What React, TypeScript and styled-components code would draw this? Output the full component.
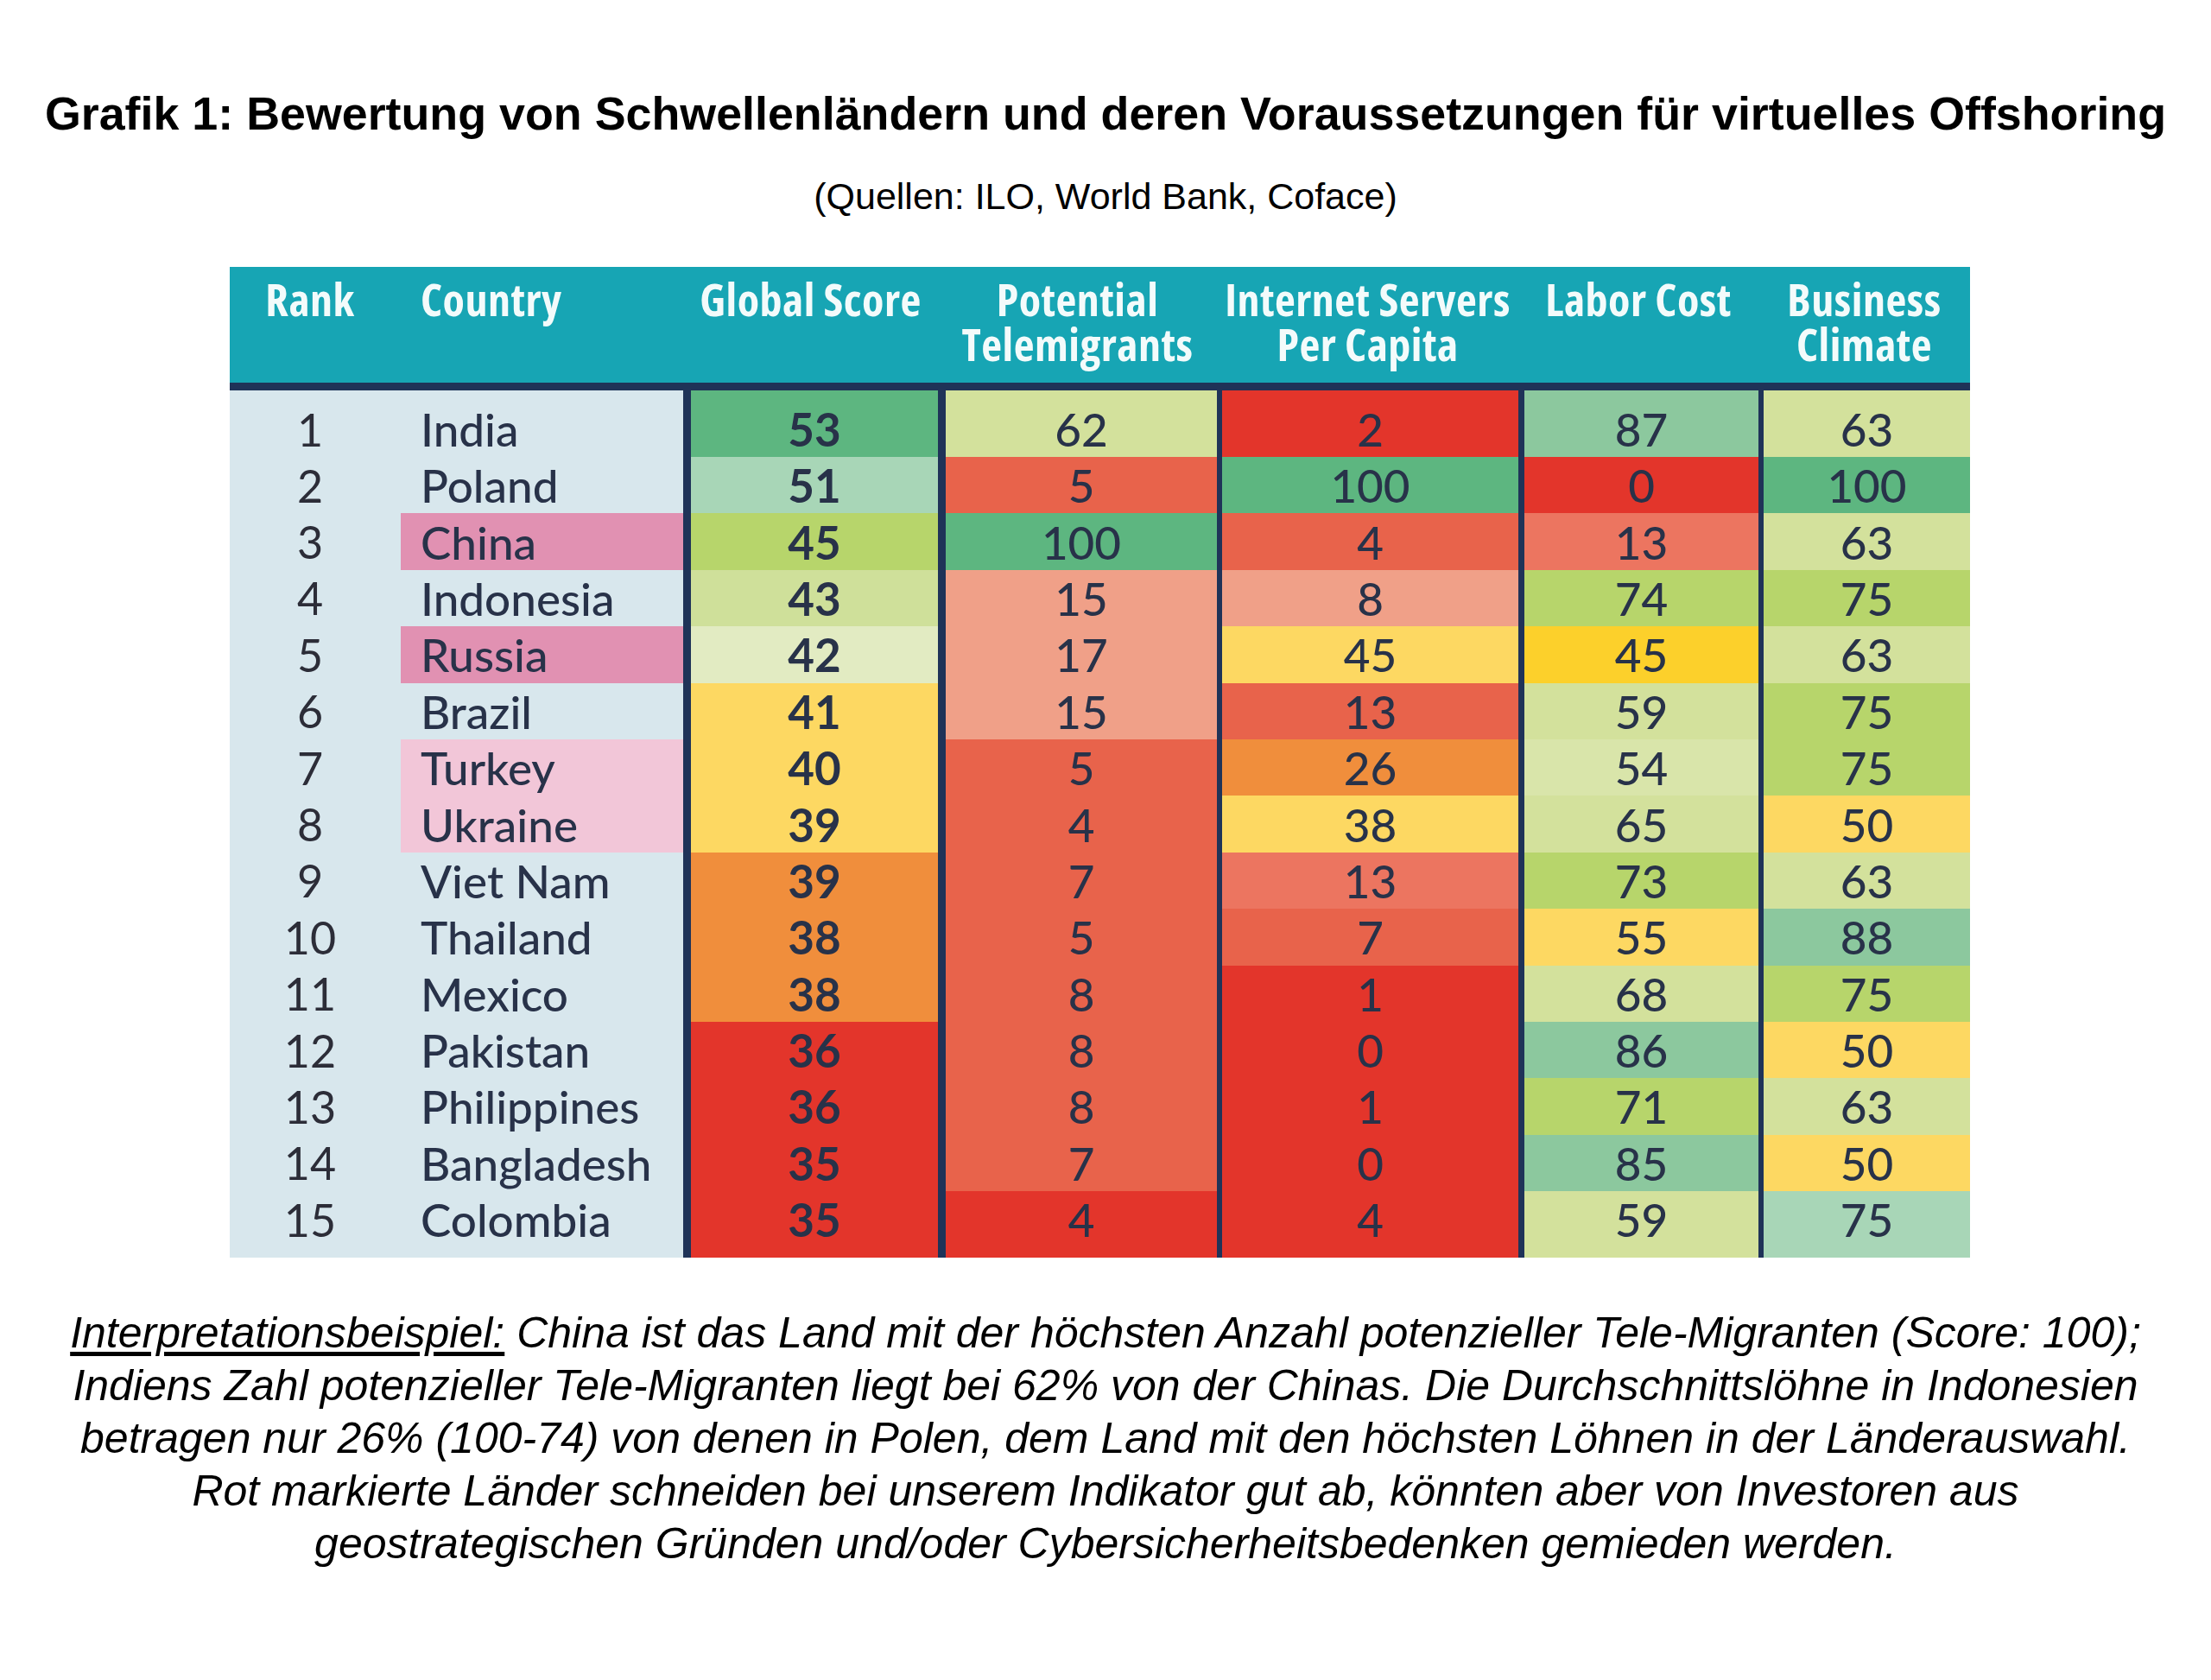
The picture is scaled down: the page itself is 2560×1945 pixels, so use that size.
import React from "react";
import styled, { createGlobalStyle } from "styled-components";

const GlobalStyle = createGlobalStyle`
  html, body { margin: 0; padding: 0; background: #ffffff; }
  body { font-family: "Liberation Sans", Arial, sans-serif; color: #000; }
`;

const C = {
  G: "#5db680",
  G2: "#8cc89e",
  G3: "#a8d6b7",
  L: "#b7d56b",
  P: "#d3e19c",
  P1: "#cfe09a",
  P2: "#e2ebc2",
  P3: "#d9e5aa",
  Y: "#fdd862",
  Y2: "#fcd02b",
  O: "#f08e3c",
  S: "#f0a088",
  S2: "#ec7560",
  R2: "#e8634b",
  R: "#e3352b",
};

type Cell = [number, string];
type Row = {
  rank: number;
  country: string;
  mark?: "hot" | "soft";
  cells: Cell[];
};

const rows: Row[] = [
  { rank: 1, country: "India", cells: [[53, C.G], [62, C.P], [2, C.R], [87, C.G2], [63, C.P]] },
  { rank: 2, country: "Poland", cells: [[51, C.G3], [5, C.R2], [100, C.G], [0, C.R], [100, C.G]] },
  { rank: 3, country: "China", mark: "hot", cells: [[45, C.L], [100, C.G], [4, C.R2], [13, C.S2], [63, C.P]] },
  { rank: 4, country: "Indonesia", cells: [[43, C.P1], [15, C.S], [8, C.S], [74, C.L], [75, C.L]] },
  { rank: 5, country: "Russia", mark: "hot", cells: [[42, C.P2], [17, C.S], [45, C.Y], [45, C.Y2], [63, C.P]] },
  { rank: 6, country: "Brazil", cells: [[41, C.Y], [15, C.S], [13, C.R2], [59, C.P], [75, C.L]] },
  { rank: 7, country: "Turkey", mark: "soft", cells: [[40, C.Y], [5, C.R2], [26, C.O], [54, C.P3], [75, C.L]] },
  { rank: 8, country: "Ukraine", mark: "soft", cells: [[39, C.Y], [4, C.R2], [38, C.Y], [65, C.P], [50, C.Y]] },
  { rank: 9, country: "Viet Nam", cells: [[39, C.O], [7, C.R2], [13, C.S2], [73, C.L], [63, C.P]] },
  { rank: 10, country: "Thailand", cells: [[38, C.O], [5, C.R2], [7, C.R2], [55, C.Y], [88, C.G2]] },
  { rank: 11, country: "Mexico", cells: [[38, C.O], [8, C.R2], [1, C.R], [68, C.P], [75, C.L]] },
  { rank: 12, country: "Pakistan", cells: [[36, C.R], [8, C.R2], [0, C.R], [86, C.G2], [50, C.Y]] },
  { rank: 13, country: "Philippines", cells: [[36, C.R], [8, C.R2], [1, C.R], [71, C.L], [63, C.P]] },
  { rank: 14, country: "Bangladesh", cells: [[35, C.R], [7, C.R2], [0, C.R], [85, C.G2], [50, C.Y]] },
  { rank: 15, country: "Colombia", cells: [[35, C.R], [4, C.R], [4, C.R], [59, C.P], [75, C.G3]] },
];

const dividers = [9, 9, 6, 7, 6];

const COLS = "198px 327px 295px 323px 349px 278px 245px";
const NAVY = "#1f3358";
const INK = "#283249";

const Page = styled.div`
  width: 2560px;
  min-height: 1945px;
  display: flex;
  flex-direction: column;
  align-items: center;
  padding-top: 100px;
  box-sizing: border-box;
`;

const Title = styled.h1`
  margin: 0;
  font-family: "Liberation Sans", Arial, sans-serif;
  font-weight: 700;
  font-size: 53.8px;
  line-height: 62px;
  color: #000;
  white-space: nowrap;
`;

const Subtitle = styled.div`
  margin-top: 41px;
  font-family: "Liberation Sans", Arial, sans-serif;
  font-size: 43px;
  line-height: 48px;
  color: #000;
`;

const Table = styled.div`
  margin-top: 58px;
  align-self: flex-start;
  margin-left: 266px;
  width: 2015px;
  display: flex;
  flex-direction: column;
`;

const HeaderRow = styled.div`
  display: grid;
  grid-template-columns: ${COLS};
  height: 134px;
  background: #17a5b4;
  border-bottom: 9px solid ${NAVY};
`;

const HeadCell = styled.div<{ $align?: "left" | "center"; $indent?: number; $shift?: number }>`
  padding-top: 11px;
  padding-left: ${(p) => p.$indent ?? 0}px;
  padding-right: ${(p) => p.$shift ?? 0}px;
  text-align: ${(p) => p.$align ?? "center"};
  font-family: "Open Sans", "Liberation Sans", sans-serif;
  font-stretch: 75%;
  font-weight: 700;
  font-size: 52px;
  line-height: 52px;
  letter-spacing: 0.5px;
  color: #f3fbfb;
  white-space: nowrap;
`;

const Body = styled.div`
  display: grid;
  grid-template-columns: ${COLS};
  grid-template-rows: 77px repeat(13, 65.4px) 77px;
`;

const edgePad = (edge?: "first" | "last") =>
  edge === "first" ? "padding-top: 12px;" : edge === "last" ? "padding-bottom: 12px;" : "";

const RankCell = styled.div<{ $edge?: "first" | "last" }>`
  display: flex;
  align-items: center;
  justify-content: center;
  background: #d8e7ed;
  ${(p) => edgePad(p.$edge)}
  padding-right: 12px;
  font-family: "Lato", "Open Sans", sans-serif;
  font-weight: 400;
  font-size: 52px;
  color: #2c2d38;
`;

const CountryCell = styled.div<{ $edge?: "first" | "last" }>`
  display: flex;
  align-items: stretch;
  background: #d8e7ed;
  ${(p) => edgePad(p.$edge)}
`;

const CountryTag = styled.div<{ $mark?: "hot" | "soft" }>`
  flex: 1;
  display: flex;
  align-items: center;
  padding-left: 23px;
  background: ${(p) => (p.$mark === "hot" ? "#e191b2" : p.$mark === "soft" ? "#f2c6d8" : "transparent")};
  font-family: "Lato", "Open Sans", sans-serif;
  font-weight: 500;
  font-size: 53px;
  color: ${INK};
`;

const ScoreCell = styled.div<{ $bg: string; $div: number; $bold?: boolean; $edge?: "first" | "last" }>`
  display: flex;
  align-items: center;
  justify-content: center;
  background: ${(p) => p.$bg};
  border-left: ${(p) => p.$div}px solid ${NAVY};
  ${(p) => edgePad(p.$edge)}
  font-family: "Lato", "Open Sans", sans-serif;
  font-weight: ${(p) => (p.$bold ? 700 : 500)};
  font-size: 53px;
  color: ${INK};
`;

const Note = styled.p`
  margin: 57px 0 0;
  font-family: "Liberation Sans", Arial, sans-serif;
  font-style: italic;
  font-size: 50px;
  line-height: 61px;
  text-align: center;
  color: #000;
  white-space: nowrap;
`;

const Lead = styled.span`
  text-decoration: underline;
  text-underline-offset: 5px;
`;

const headers: { label: React.ReactNode; align?: "left" | "center"; indent?: number; shift?: number }[] = [
  { label: "Rank", shift: 12 },
  { label: "Country", align: "left", indent: 23 },
  { label: "Global Score" },
  { label: <>Potential<br />Telemigrants</> },
  { label: <>Internet Servers<br />Per Capita</> },
  { label: "Labor Cost" },
  { label: <>Business<br />Climate</> },
];

export default function App() {
  return (
    <>
      <GlobalStyle />
      <Page>
        <Title>Grafik 1: Bewertung von Schwellenländern und deren Voraussetzungen für virtuelles Offshoring</Title>
        <Subtitle>(Quellen: ILO, World Bank, Coface)</Subtitle>
        <Table>
          <HeaderRow>
            {headers.map((h, i) => (
              <HeadCell key={i} $align={h.align} $indent={h.indent} $shift={h.shift}>
                {h.label}
              </HeadCell>
            ))}
          </HeaderRow>
          <Body>
            {rows.map((r, ri) => {
              const edge = ri === 0 ? "first" : ri === rows.length - 1 ? "last" : undefined;
              return (
                <React.Fragment key={r.rank}>
                  <RankCell $edge={edge}>{r.rank}</RankCell>
                  <CountryCell $edge={edge}>
                    <CountryTag $mark={r.mark}>{r.country}</CountryTag>
                  </CountryCell>
                  {r.cells.map(([v, bg], ci) => (
                    <ScoreCell key={ci} $bg={bg} $div={dividers[ci]} $bold={ci === 0} $edge={edge}>
                      {v}
                    </ScoreCell>
                  ))}
                </React.Fragment>
              );
            })}
          </Body>
        </Table>
        <Note>
          <Lead>Interpretationsbeispiel:</Lead> China ist das Land mit der höchsten Anzahl potenzieller Tele-Migranten (Score: 100);
          <br />
          Indiens Zahl potenzieller Tele-Migranten liegt bei 62% von der Chinas. Die Durchschnittslöhne in Indonesien
          <br />
          betragen nur 26% (100-74) von denen in Polen, dem Land mit den höchsten Löhnen in der Länderauswahl.
          <br />
          Rot markierte Länder schneiden bei unserem Indikator gut ab, könnten aber von Investoren aus
          <br />
          geostrategischen Gründen und/oder Cybersicherheitsbedenken gemieden werden.
        </Note>
      </Page>
    </>
  );
}
